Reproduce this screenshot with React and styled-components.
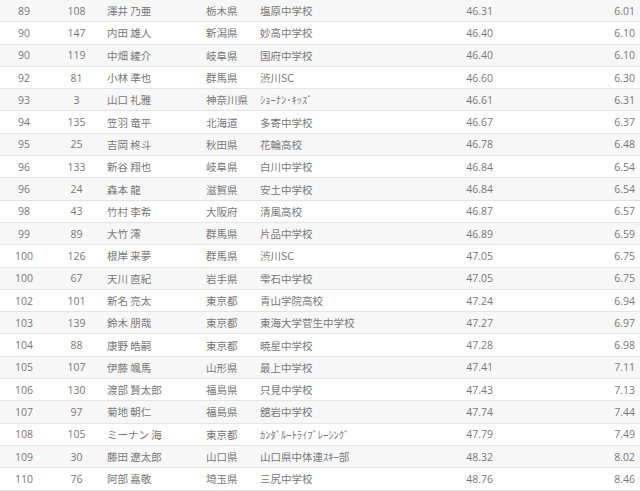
import React from "react";
import styled, { createGlobalStyle } from "styled-components";

const rows = [
	["89", "108", "澤井 乃亜", "栃木県", "塩原中学校", "46.31", "6.01"],
	["90", "147", "内田 雄人", "新潟県", "妙高中学校", "46.40", "6.10"],
	["90", "119", "中畑 綾介", "岐阜県", "国府中学校", "46.40", "6.10"],
	["92", "81", "小林 準也", "群馬県", "渋川SC", "46.60", "6.30"],
	["93", "3", "山口 礼雅", "神奈川県", "ｼｮｰﾅﾝ･ｷｯｽﾞ", "46.61", "6.31"],
	["94", "135", "笠羽 竜平", "北海道", "多寄中学校", "46.67", "6.37"],
	["95", "25", "吉岡 柊斗", "秋田県", "花輪高校", "46.78", "6.48"],
	["96", "133", "新谷 翔也", "岐阜県", "白川中学校", "46.84", "6.54"],
	["96", "24", "森本 龍", "滋賀県", "安土中学校", "46.84", "6.54"],
	["98", "43", "竹村 李希", "大阪府", "清風高校", "46.87", "6.57"],
	["99", "89", "大竹 澪", "群馬県", "片品中学校", "46.89", "6.59"],
	["100", "126", "根岸 来夢", "群馬県", "渋川SC", "47.05", "6.75"],
	["100", "67", "天川 直紀", "岩手県", "雫石中学校", "47.05", "6.75"],
	["102", "101", "新名 亮太", "東京都", "青山学院高校", "47.24", "6.94"],
	["103", "139", "鈴木 朋哉", "東京都", "東海大学菅生中学校", "47.27", "6.97"],
	["104", "88", "康野 皓嗣", "東京都", "暁星中学校", "47.28", "6.98"],
	["105", "107", "伊藤 颯馬", "山形県", "最上中学校", "47.41", "7.11"],
	["106", "130", "渡部 賢太郎", "福島県", "只見中学校", "47.43", "7.13"],
	["107", "97", "菊地 朝仁", "福島県", "舘岩中学校", "47.74", "7.44"],
	["108", "105", "ミーナン 海", "東京都", "ｶﾝﾀﾞﾙｰﾄﾗｲﾌﾞﾚｰｼﾝｸﾞ", "47.79", "7.49"],
	["109", "30", "藤田 遼太郎", "山口県", "山口県中体連ｽｷｰ部", "48.32", "8.02"],
	["110", "76", "阿部 嘉敬", "埼玉県", "三尻中学校", "48.76", "8.46"],
];

const GlobalStyle = createGlobalStyle`
	body {
		margin: 0;
		background: #fff;
		font-family: "Noto Sans CJK JP", "Open Sans", sans-serif;
	}
`;

const Table = styled.div`
	display: flex;
	flex-direction: column;
	width: 640px;
`;

const Row = styled.div`
	display: grid;
	grid-template-columns: 48px 57px 101px 54px 1fr 85px 142px;
	align-items: center;
	height: 22.3px;
	box-sizing: border-box;
	border-bottom: 1px solid #e4e4e4;
	background: ${(p) => (p.$odd ? "#f7f7f7" : "#fff")};
	color: #777;
	font-size: 10.5px;
`;

const Cell = styled.span`
	text-align: ${(p) => p.$align || "left"};
	padding-right: ${(p) => (p.$align === "right" ? "5px" : "0")};
	padding-left: ${(p) => (p.$pad ? "2px" : "0")};
	white-space: nowrap;
	font-family: ${(p) => (p.$num ? '"Open Sans", sans-serif' : "inherit")};
`;

export default function App() {
	return (
		<Table>
			<GlobalStyle />
			{rows.map((r, i) => (
				<Row key={i} $odd={i % 2 === 0}>
					<Cell $align="center" $num>{r[0]}</Cell>
					<Cell $align="center" $num>{r[1]}</Cell>
					<Cell $pad>{r[2]}</Cell>
					<Cell>{r[3]}</Cell>
					<Cell>{r[4]}</Cell>
					<Cell $align="right" $num>{r[5]}</Cell>
					<Cell $align="right" $num>{r[6]}</Cell>
				</Row>
			))}
		</Table>
	);
}
